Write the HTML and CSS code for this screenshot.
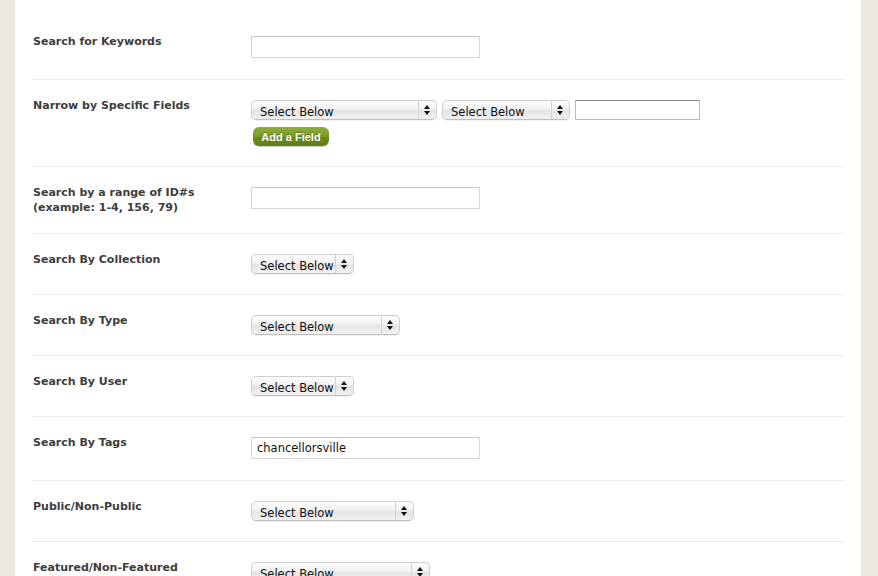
FILE: index.html
```html
<!DOCTYPE html>
<html>
<head>
<meta charset="utf-8">
<link rel="stylesheet" href="styles.css">
</head>
<body>
<div class="page">
  <div class="panel">
    <form class="search">
      <div class="row">
        <label class="lbl">Search for Keywords</label>
        <div class="ctl"><input class="txt w229" type="text"></div>
      </div>
      <div class="row">
        <label class="lbl">Narrow by Specific Fields</label>
        <div class="ctl">
          <div class="line">
            <span class="sel w186"><select><option>Select Below</option></select><span class="arr"><i class="up"></i><i class="dn"></i></span></span>
            <span class="sel w128"><select><option>Select Below</option></select><span class="arr"><i class="up"></i><i class="dn"></i></span></span>
            <input class="txt small" type="text">
          </div>
          <button type="button" class="btn">Add a Field</button>
        </div>
      </div>
      <div class="row">
        <label class="lbl">Search by a range of ID#s<br>(example: 1-4, 156, 79)</label>
        <div class="ctl"><input class="txt w229" type="text"></div>
      </div>
      <div class="row">
        <label class="lbl">Search By Collection</label>
        <div class="ctl"><span class="sel w103"><select><option>Select Below</option></select><span class="arr"><i class="up"></i><i class="dn"></i></span></span></div>
      </div>
      <div class="row">
        <label class="lbl">Search By Type</label>
        <div class="ctl"><span class="sel w149"><select><option>Select Below</option></select><span class="arr"><i class="up"></i><i class="dn"></i></span></span></div>
      </div>
      <div class="row">
        <label class="lbl">Search By User</label>
        <div class="ctl"><span class="sel w103"><select><option>Select Below</option></select><span class="arr"><i class="up"></i><i class="dn"></i></span></span></div>
      </div>
      <div class="row">
        <label class="lbl">Search By Tags</label>
        <div class="ctl"><input class="txt w229" type="text" value="chancellorsville"></div>
      </div>
      <div class="row">
        <label class="lbl">Public/Non-Public</label>
        <div class="ctl"><span class="sel w163"><select><option>Select Below</option></select><span class="arr"><i class="up"></i><i class="dn"></i></span></span></div>
      </div>
      <div class="row">
        <label class="lbl">Featured/Non-Featured</label>
        <div class="ctl"><span class="sel w179"><select><option>Select Below</option></select><span class="arr"><i class="up"></i><i class="dn"></i></span></span></div>
      </div>
    </form>
  </div>
</div>
</body>
</html>
```
FILE: styles.css
```css
html, body {
  margin: 0;
  padding: 0;
  background: #ebe8dd;
  overflow: hidden;
}
.page {
  padding: 0 17px 0 15px;
}
.panel {
  background: #fff;
  padding: 16px 17px 40px 18px;
  min-height: 600px;
}
.search {
  font-family: "DejaVu Sans", Verdana, sans-serif;
}
.row {
  display: flex;
  align-items: flex-start;
  padding: 18px 0 20px;
  border-bottom: 1px dotted #d9d9d9;
}
.lbl {
  width: 218px;
  flex: none;
  font-size: 11px;
  font-weight: bold;
  line-height: 15px;
  margin-bottom: -2px;
  color: #3d3d3d;
}
.ctl {
  padding-top: 2px;
  display: flex;
  flex-direction: column;
  align-items: flex-start;
}
.line {
  display: flex;
  gap: 5px;
  align-items: center;
}
.txt {
  box-sizing: border-box;
  height: 22px;
  margin: 0 0 1px;
  border: 1px solid #d6d6d6;
  border-top-color: #c8c8c8;
  padding: 0 5px;
  font-family: "DejaVu Sans", sans-serif;
  font-size: 11.5px;
  color: #111;
  background: #fff;
  outline: none;
}
.txt.small {
  height: 20px;
  width: 125px;
  border-color: #bbb;
  border-top-color: #888;
  margin: 0;
}
.w229 { width: 229px; }
.sel {
  position: relative;
  display: inline-block;
  height: 20px;
  box-sizing: border-box;
  border-radius: 5px;
  border: 1px solid #cfcfcf;
  border-bottom-color: #bdbdbd;
  background: linear-gradient(#fdfdfd 0%, #f1f1f1 45%, #e4e4e4 55%, #f2f2f2 100%);
  box-shadow: 0 1px 0 rgba(0,0,0,0.05);
}
.sel select {
  -webkit-appearance: none;
  appearance: none;
  box-sizing: border-box;
  border: 0;
  background: transparent;
  width: 100%;
  height: 18px;
  margin: 0;
  padding: 0 20px 2px 8px;
  font-family: "DejaVu Sans", sans-serif;
  font-size: 11.5px;
  color: #111;
  outline: none;
}
.arr {
  position: absolute;
  right: 0;
  top: 0;
  bottom: 0;
  width: 17px;
  border-left: 1px solid #d4d4d4;
  pointer-events: none;
}
.arr i {
  position: absolute;
  left: 5px;
  width: 0;
  height: 0;
  border-left: 3px solid transparent;
  border-right: 3px solid transparent;
}
.arr .up {
  top: 4px;
  border-bottom: 4px solid #111;
}
.arr .dn {
  top: 10px;
  border-top: 4px solid #111;
}
.w186 { width: 186px; }
.w128 { width: 128px; }
.w103 { width: 103px; }
.w149 { width: 149px; }
.w163 { width: 163px; }
.w179 { width: 179px; }
.btn {
  margin: 7px 0 0 2px;
  height: 19px;
  width: 76px;
  padding: 0;
  border: 0;
  border-radius: 6px;
  background: linear-gradient(#8fae3c 0%, #7a9a28 50%, #6a8a1c 52%, #5f7e16 100%);
  color: #fff;
  font-family: "Liberation Sans", Arial, sans-serif;
  font-weight: bold;
  font-size: 11px;
  text-shadow: 0 -1px 0 rgba(0,0,0,0.3);
  box-shadow: 0 1px 1px rgba(0,0,0,0.2);
}
```
